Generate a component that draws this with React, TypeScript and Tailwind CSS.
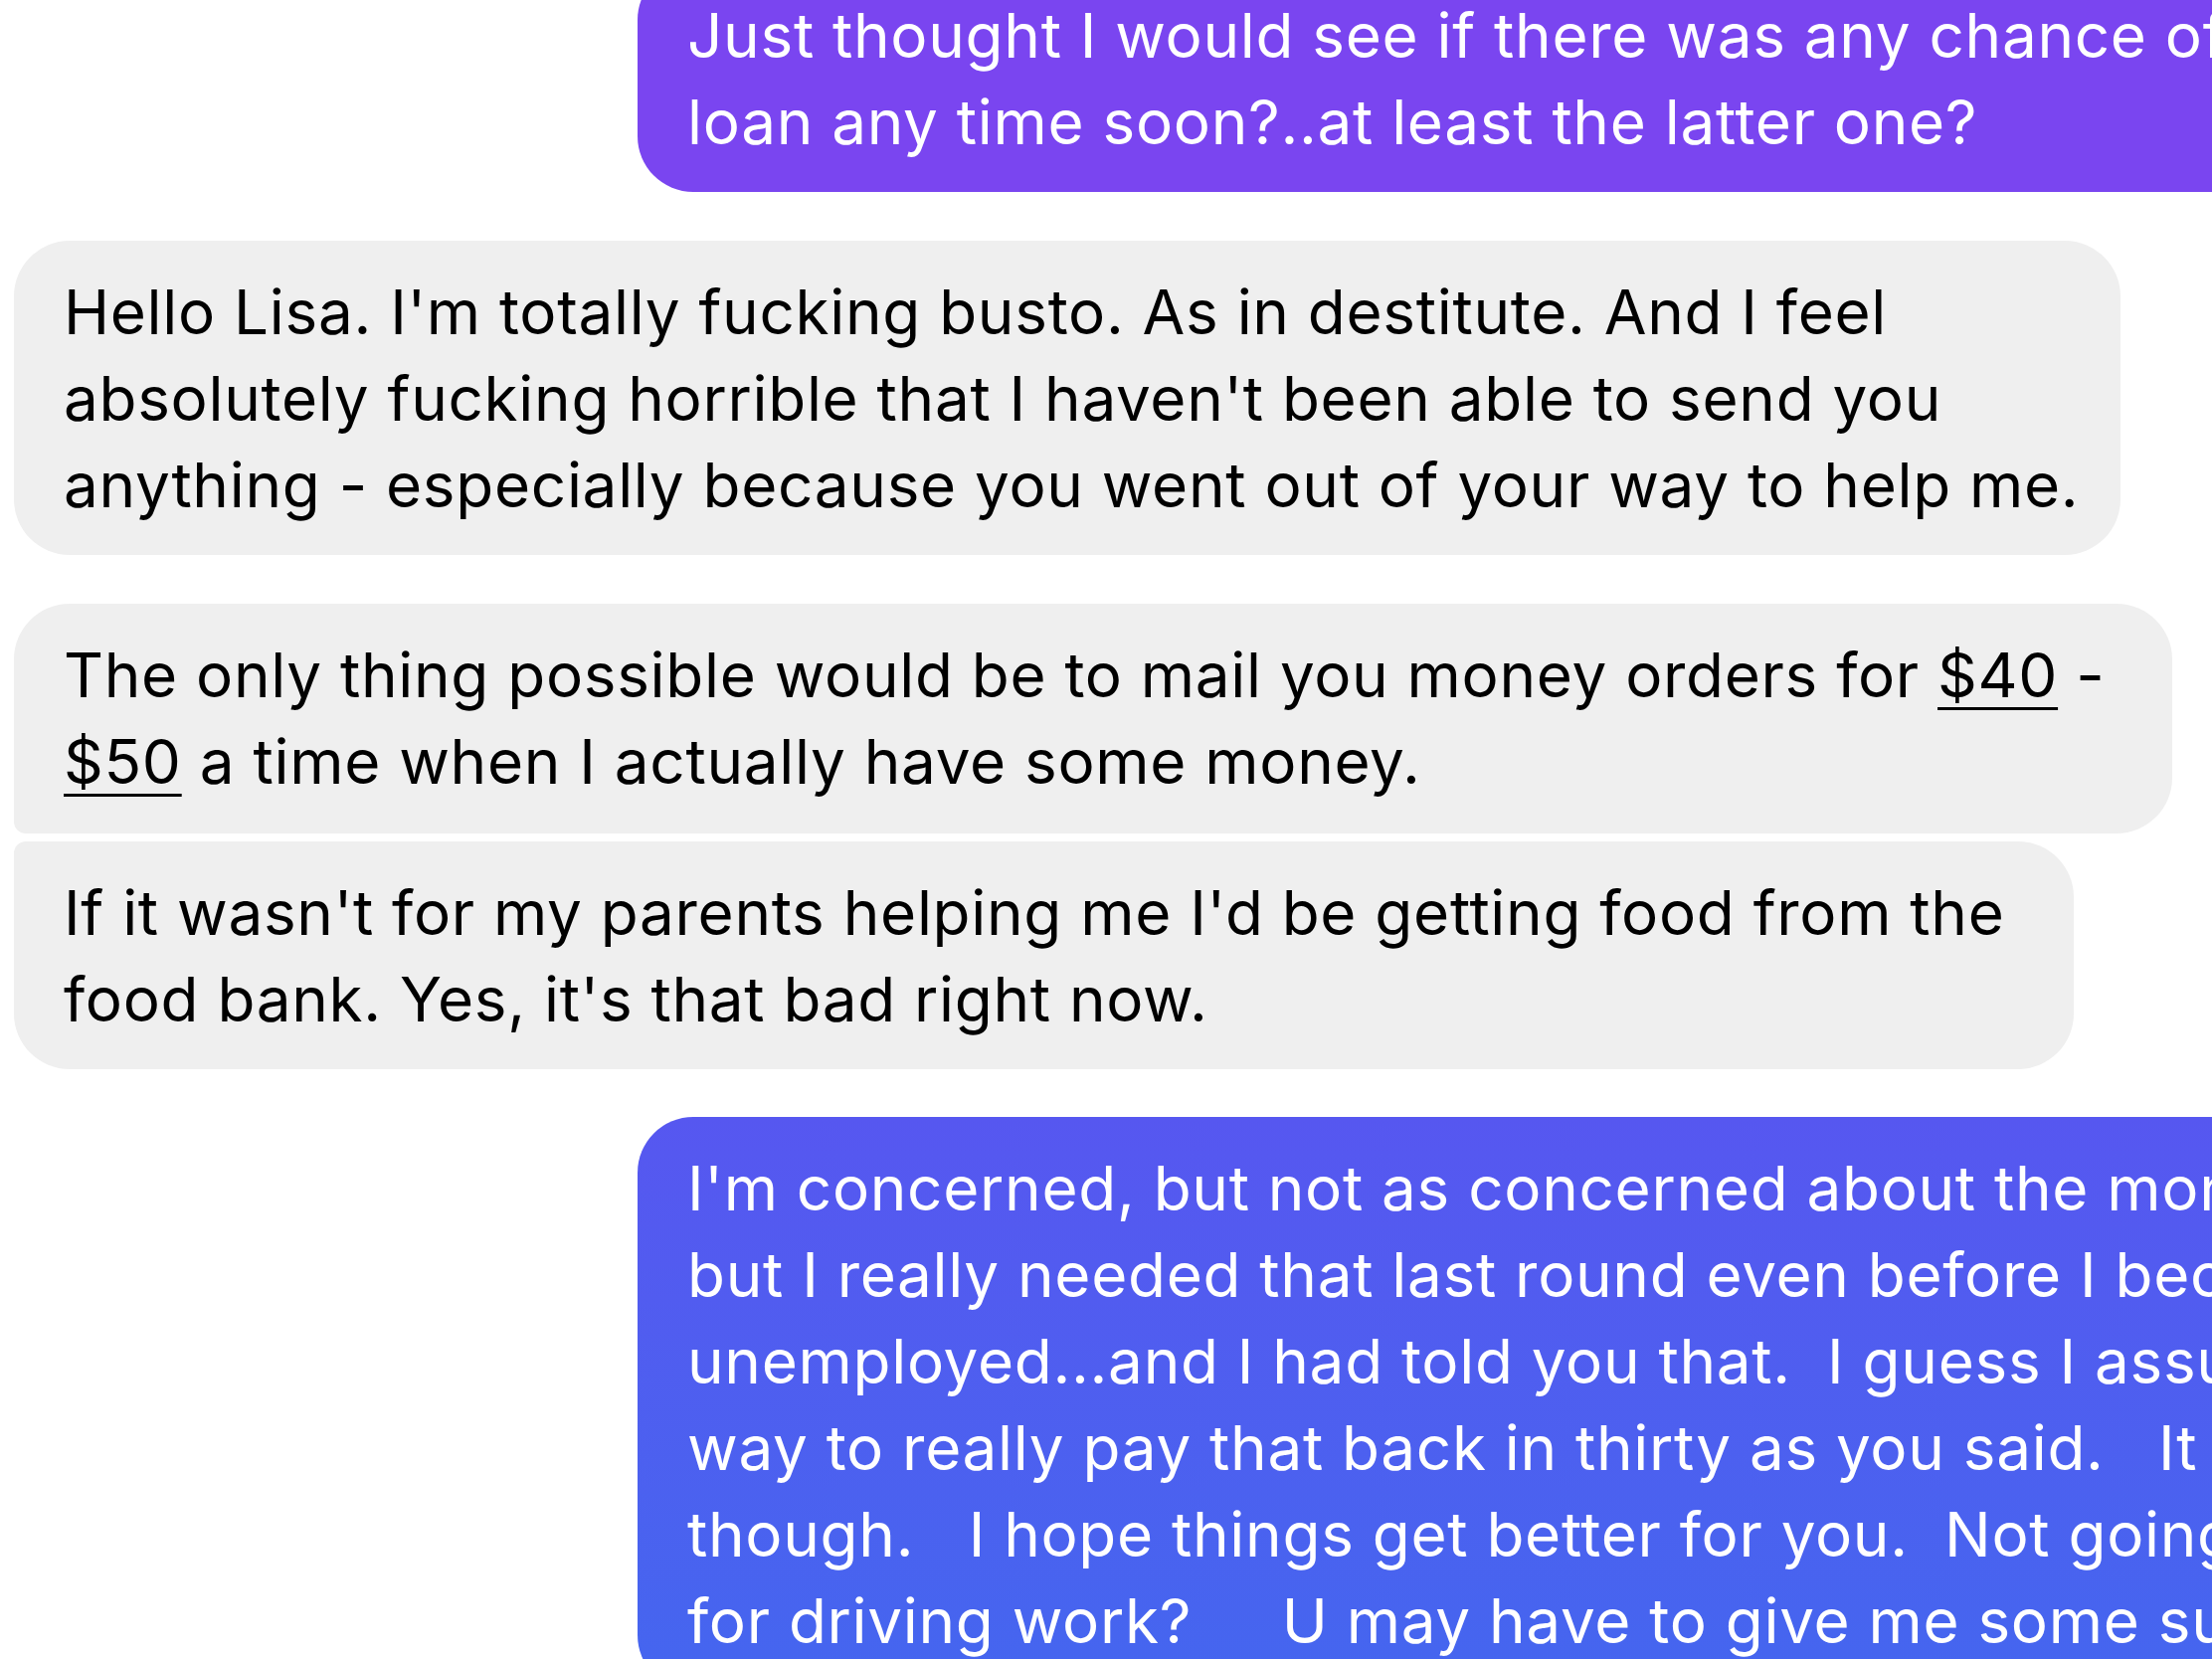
const topLines = [
    "Just thought I would see if there was any chance of the",
    "loan any time soon?..at least the latter one?",
];

const helloLines = [
    "Hello Lisa. I'm totally fucking busto. As in destitute. And I feel",
    "absolutely fucking horrible that I haven't been able to send you",
    "anything - especially because you went out of your way to help me.",
];

const foodLines = [
    "If it wasn't for my parents helping me I'd be getting food from the",
    "food bank. Yes, it's that bad right now.",
];

const concernedLines = [
    "I'm concerned, but not as concerned about the money,",
    "but I really needed that last round even before I became",
    "unemployed...and I had told you that.  I guess I assumed",
    "way to really pay that back in thirty as you said.   It is",
    "though.   I hope things get better for you.  Not going",
    "for driving work?     U may have to give me some suggestions",
];

const Lines = ({ lines }: { lines: string[] }) => (
    <>
        {lines.map((line) => (
            <div key={line} className="whitespace-pre">
                {line}
            </div>
        ))}
    </>
);

export default function App() {
    return (
        <div className="w-[2224px] h-[1668px] overflow-hidden bg-white font-['Inter','Liberation_Sans',sans-serif] text-[62px] leading-[87px] tracking-[0.7px]">
            <div className="flex flex-col -mt-[36px]">
                <div className="ml-[641px] w-[1700px] rounded-[56px] bg-[#7a45f0] pl-[50px] pt-[28px] pb-[27px] text-white">
                    <Lines lines={topLines} />
                </div>

                <div className="ml-[14px] mt-[49px] w-[2118px] rounded-[56px] bg-[#efefef] pl-[50px] pt-[28px] pb-[27px] text-black">
                    <Lines lines={helloLines} />
                </div>

                <div className="ml-[14px] mt-[49px] w-[2170px] rounded-[56px] rounded-bl-[12px] bg-[#efefef] pl-[50px] pt-[28px] pb-[29px] text-black">
                    <div className="whitespace-pre">
                        The only thing possible would be to mail you money orders for{" "}
                        <span className="underline decoration-[3px] underline-offset-[10px]">$40</span> -
                    </div>
                    <div className="whitespace-pre">
                        <span className="underline decoration-[3px] underline-offset-[10px]">$50</span> a time when I actually have some money.
                    </div>
                </div>

                <div className="ml-[14px] mt-[8px] w-[2071px] rounded-[56px] rounded-tl-[12px] bg-[#efefef] pl-[50px] pt-[28px] pb-[27px] text-black">
                    <Lines lines={foodLines} />
                </div>

                <div className="ml-[641px] mt-[48px] w-[1700px] rounded-[56px] bg-gradient-to-b from-[#5657f0] to-[#4466ef] pl-[50px] pt-[28px] pb-[27px] text-white">
                    <Lines lines={concernedLines} />
                </div>
            </div>
        </div>
    );
}
